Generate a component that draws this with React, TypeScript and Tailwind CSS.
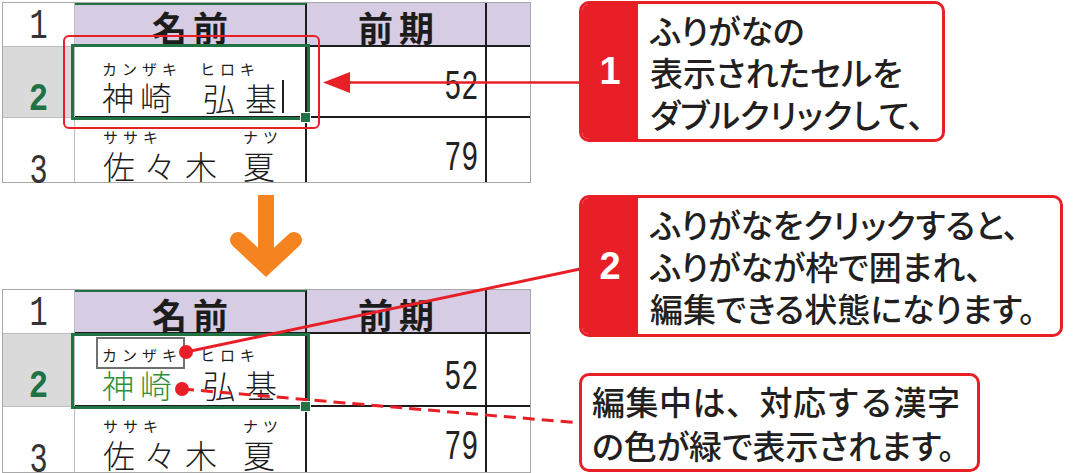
import type { ReactNode } from 'react'

const jp = "font-['Noto_Sans_CJK_JP','Noto_Sans',sans-serif]"
const mono = "font-['Liberation_Mono','DejaVu_Sans_Mono',monospace]"
const kana = 'h-[14px] gap-[5px] text-[15px] leading-[14px] font-normal'

function Chars({ text, className }: { text: string; className: string }) {
  return (
    <div className={`flex ${className}`}>
      {[...text].map((c, i) => (
        <span key={i}>{c}</span>
      ))}
    </div>
  )
}

function RowHead({ n, className }: { n: string; className: string }) {
  return (
    <div className={`flex justify-center border-r border-b border-[#bdbdbd] ${className}`}>
      <span className={`${mono} inline-block scale-x-[0.72] text-[42px] leading-[42px] text-[#333]`}>{n}</span>
    </div>
  )
}

function NumCell({ n, className }: { n: string; className: string }) {
  return (
    <div className={`flex justify-end border-r-2 border-[#1c1c1c] pr-[7px] ${className}`}>
      <span className={`${mono} inline-block origin-right scale-x-[0.68] text-[42px] leading-[42px] text-[#222]`}>{n}</span>
    </div>
  )
}

function Sheet({ edited = false }: { edited?: boolean }) {
  return (
    <div className={`${jp} relative w-[529px] border border-[#a8a8a8] bg-white text-[#1c1c1c]`}>
      <div
        className={
          edited
            ? 'grid grid-cols-[72px_232px_180px_43px] grid-rows-[44px_73px_65px]'
            : 'grid grid-cols-[72px_232px_180px_43px] grid-rows-[44px_71px_64px]'
        }
      >
        {/* row 1 */}
        <RowHead n="1" className="pt-[3px]" />
        <div className="flex items-center justify-center border-t-2 border-r-2 border-b-2 border-t-[#217346] border-r-[#1c1c1c] border-b-[#1c1c1c] bg-[#d6cce3] pt-[4px] pl-[6px] text-[35px] font-bold tracking-[6px]">
          名前
        </div>
        <div className="flex items-center justify-center border-r-2 border-b-2 border-[#1c1c1c] bg-[#d6cce3] pt-[6px] pl-[6px] text-[35px] font-bold tracking-[6px]">
          前期
        </div>
        <div className="border-b-2 border-[#1c1c1c] bg-[#d6cce3]" />

        {/* row 2 */}
        <div className="flex justify-center border-r border-b border-[#bdbdbd] bg-[#dadada] pt-[34px]">
          <span className={`${mono} inline-block scale-x-[0.85] text-[38px] leading-[38px] font-bold text-[#1f7244]`}>2</span>
        </div>
        <div className={edited ? 'overflow-hidden border-r-2 border-b-2 border-[#1c1c1c] pt-[14px] pl-[27px] font-light' : 'overflow-hidden border-r-2 border-b-2 border-[#1c1c1c] pt-[15px] pl-[27px] font-light'}>
          <div className="flex">
            <div className="w-[98px]">
              <Chars text="カンザキ" className={kana} />
              <Chars
                text="神崎"
                className={edited ? 'mt-[6px] gap-[6px] text-[32px] leading-[32px] text-[#2f8f37]' : 'mt-[4px] gap-[6px] text-[32px] leading-[32px]'}
              />
            </div>
            <div>
              <Chars text="ヒロキ" className={kana} />
              <div className={edited ? 'mt-[6px] ml-[3px] flex items-center' : 'mt-[4px] ml-[3px] flex items-center'}>
                <Chars text="弘基" className="gap-[10px] text-[32px] leading-[32px]" />
                {!edited && <span className="ml-[5px] h-[33px] w-[2px] bg-[#222]" />}
              </div>
            </div>
          </div>
        </div>
        <NumCell n="52" className={edited ? 'border-b-2 pt-[23px]' : 'border-b-2 pt-[20px]'} />
        <div className="border-b-2 border-[#1c1c1c]" />

        {/* row 3 */}
        <RowHead n="3" className="border-b-0 pt-[33px]" />
        <div className="overflow-hidden border-r-2 border-[#1c1c1c] pt-[12px] pl-[28px] font-light">
          <div className="flex">
            <div className="w-[140px]">
              <Chars text="ササキ" className={kana} />
              <Chars text="佐々木" className="mt-[5px] gap-[9px] text-[32px] leading-[32px]" />
            </div>
            <div>
              <Chars text="ナツ" className={kana} />
              <Chars text="夏" className="mt-[5px] text-[32px] leading-[32px]" />
            </div>
          </div>
        </div>
        <NumCell n="79" className="pt-[20px]" />
        <div />
      </div>

      {/* selection and markers */}
      <div
        className={
          edited
            ? 'absolute top-[43px] left-[68px] h-[76px] w-[239px] border-[3px] border-[#217346]'
            : 'absolute top-[41px] left-[68px] h-[76px] w-[239px] border-[3px] border-[#217346]'
        }
      />
      <div
        className={
          edited
            ? 'absolute top-[111px] left-[297px] h-[11px] w-[11px] border border-white bg-[#217346]'
            : 'absolute top-[109px] left-[297px] h-[11px] w-[11px] border border-white bg-[#217346]'
        }
      />
      {edited ? (
        <div className="absolute top-[47px] left-[93px] h-[32px] w-[89px] border-2 border-[#707070]" />
      ) : (
        <div className="absolute top-[32px] left-[60px] h-[94px] w-[257px] rounded-[6px] border-2 border-[#e81f27]" />
      )}
    </div>
  )
}

function Callout({ n, className, children }: { n?: string; className: string; children: ReactNode }) {
  return (
    <div className={`flex overflow-hidden rounded-[10px] border-[3px] border-[#e81f27] bg-white ${className}`}>
      {n && (
        <div className="flex w-[56px] shrink-0 items-center justify-center bg-[#e81f27] font-['Liberation_Sans',Arial,sans-serif] text-[38px] font-bold text-white">
          {n}
        </div>
      )}
      <div
        className={`${jp} flex flex-col justify-center font-medium text-[#231f20] [font-feature-settings:'palt'] ${n ? 'pl-[12px]' : 'pl-[10px]'}`}
      >
        {children}
      </div>
    </div>
  )
}

function OrangeArrow() {
  return (
    <svg width="80" height="95" viewBox="0 0 80 95" className="mt-[7px] ml-[224px]">
      <rect x="32" y="5" width="16" height="68" fill="#f58420" />
      <path d="M12 50 L40 76 L68 50" fill="none" stroke="#f58420" strokeWidth="16" strokeLinecap="round" strokeLinejoin="miter" />
    </svg>
  )
}

export default function App() {
  return (
    <div className="relative flex h-[473px] w-[1080px] overflow-hidden bg-white">
      <div className="flex w-[579px] shrink-0 flex-col pt-[2px] pl-[2px]">
        <Sheet />
        <div className="h-[107px]">
          <OrangeArrow />
        </div>
        <Sheet edited />
      </div>

      <div className="flex flex-col pt-[1px]">
        <Callout n="1" className="h-[141px] w-[366px]">
          <div className="text-[33px] leading-[42px]">ふりがなの</div>
          <div className="text-[33px] leading-[42px]">表示されたセルを</div>
          <div className="text-[33px] leading-[42px]">ダブルクリックして、</div>
        </Callout>
        <Callout n="2" className="mt-[53px] h-[142px] w-[484px]">
          <div className="text-[33px] leading-[42px]">ふりがなをクリックすると、</div>
          <div className="text-[33px] leading-[42px]">ふりがなが枠で囲まれ、</div>
          <div className="text-[33px] leading-[42px]">編集できる状態になります。</div>
        </Callout>
        <Callout className="mt-[36px] h-[99px] w-[401px]">
          <div className="text-[33px] leading-[44px] tracking-[0.5px] [font-feature-settings:normal]">編集中は、対応する漢字</div>
          <div className="text-[33px] leading-[44px]">の色が緑で表示されます。</div>
        </Callout>
      </div>

      {/* connectors */}
      <svg className="pointer-events-none absolute top-0 left-0" width="1080" height="473">
        <line x1="348" y1="82.5" x2="580" y2="82.5" stroke="#e81f27" strokeWidth="2.5" />
        <polygon points="323,82.5 350,72 350,93" fill="#e81f27" />
        <line x1="186" y1="352" x2="580" y2="269" stroke="#e81f27" strokeWidth="3" />
        <line x1="182" y1="389" x2="580" y2="423" stroke="#e81f27" strokeWidth="3" strokeDasharray="12 7" />
        <circle cx="186" cy="352" r="7" fill="#e81f27" />
        <circle cx="182" cy="389" r="7" fill="#e81f27" />
      </svg>
    </div>
  )
}
